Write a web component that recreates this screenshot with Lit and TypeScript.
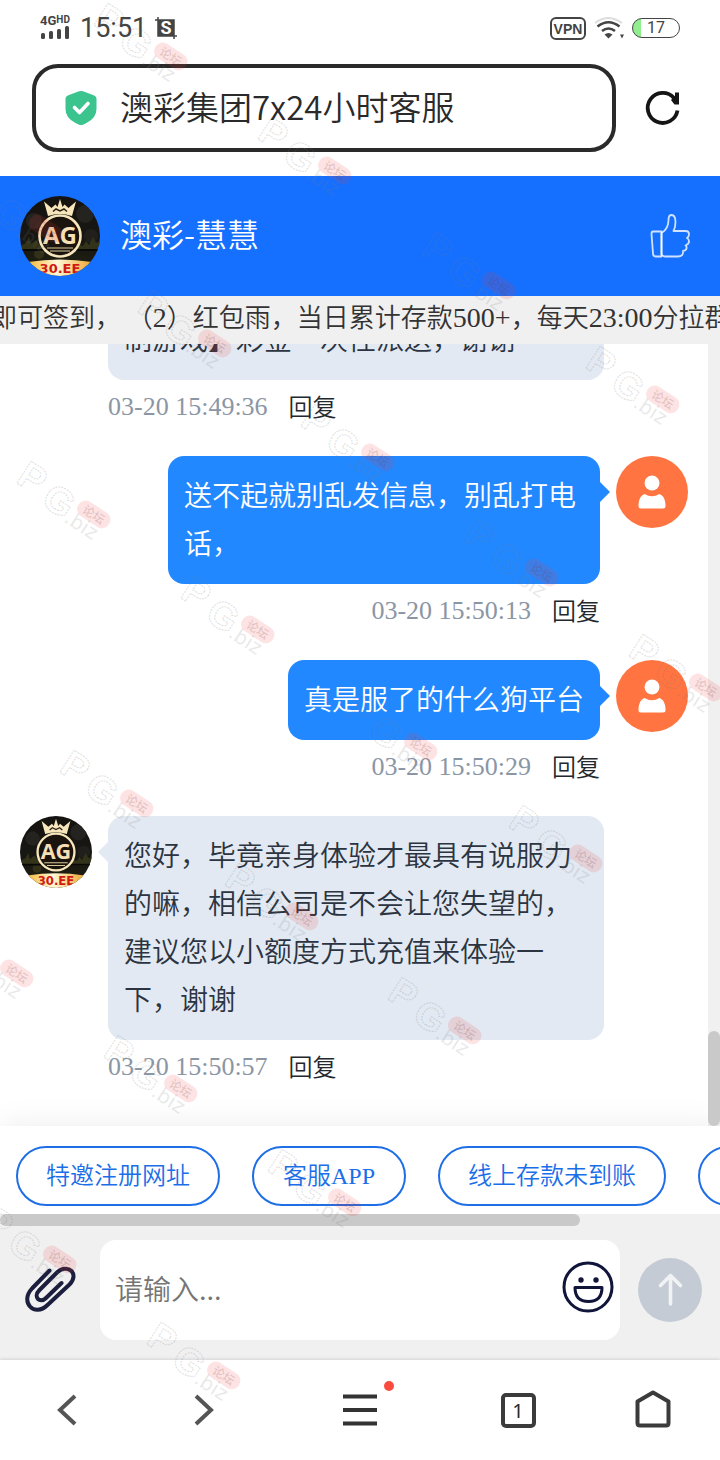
import { LitElement, html, css, svg } from 'lit';
import { customElement, property } from 'lit/decorators.js';
import { classMap } from 'lit/directives/class-map.js';

interface Message {
  from: 'agent' | 'user';
  text: string;
  time: string;
  partial?: boolean;
}

const MESSAGES: Message[] = [
  { from: 'agent', text: '制游戏】彩金一次性派送，谢谢', time: '03-20 15:49:36', partial: true },
  { from: 'user', text: '送不起就别乱发信息，别乱打电话，', time: '03-20 15:50:13' },
  { from: 'user', text: '真是服了的什么狗平台', time: '03-20 15:50:29' },
  {
    from: 'agent',
    text: '您好，毕竟亲身体验才最具有说服力的嘛，相信公司是不会让您失望的，建议您以小额度方式充值来体验一下，谢谢',
    time: '03-20 15:50:57',
  },
];

const CHIPS = ['特邀注册网址', '客服APP', '线上存款未到账', ''];

// Centres of the repeated watermark stamps.
const STAMPS: [number, number][] = [
  [171, 56], [335, 170], [46, 228], [499, 285], [215, 343], [663, 399], [378, 457],
  [94, 514], [542, 572], [258, 629], [706, 687], [421, 746], [137, 803], [586, 858],
  [302, 916], [17, 973], [465, 1030], [181, 1088], [345, 1202], [60, 1259], [224, 1375],
];

@customElement('brand-avatar')
export class BrandAvatar extends LitElement {
  static styles = css`
    :host { display: block; }
    .pic { display: block; width: 100%; height: 100%; }
    .mono { font: 700 24px 'Open Sans', sans-serif; }
    .site { font: 700 13px 'DejaVu Sans', sans-serif; }
  `;

  render() {
    return html`
      <svg class="pic" viewBox="0 0 80 80" role="img" aria-label="AG 30.EE">
        <defs>
          <clipPath id="round"><circle cx="40" cy="40" r="40" /></clipPath>
          <linearGradient id="night" x1="0" y1="0" x2="0" y2="1">
            <stop offset="0" stop-color="#15130f" />
            <stop offset="0.6" stop-color="#171713" />
            <stop offset="1" stop-color="#25220f" />
          </linearGradient>
          <linearGradient id="gold" x1="0" y1="0" x2="1" y2="0">
            <stop offset="0" stop-color="#f6b73a" />
            <stop offset="0.45" stop-color="#fff8d8" />
            <stop offset="1" stop-color="#efa62c" />
          </linearGradient>
        </defs>
        <g clip-path="url(#round)">
          <rect width="80" height="80" fill="url(#night)" />
          <circle cx="14" cy="25" r="8" fill="#24231f" />
          <circle cx="65" cy="18" r="9" fill="#24231f" />
          <circle cx="71" cy="40" r="7" fill="#201f1b" />
          <circle cx="19" cy="58" r="5" fill="#33301a" />
          <path d="M0 50l6-3 3-6 2 7 5-4 4 5 3-3v8H0zM58 48l5 2 3-5 3 4 4-8 3 6 4-2v10H58z" fill="#33331a" />
          <path d="M0 54h80" stroke="#090905" stroke-width="2" />
          <circle cx="40" cy="40" r="20.500" fill="#1b140e" stroke="#f7e6bc" stroke-width="2.600" />
          <path d="M28 20L24 5.500l7.500 6.500 4-3.500L37.500 11 40 3l2.500 8 2-2.500 4 3.500L56 5.500 52 20q-12-4-24 0z" fill="#f7e6bc" />
          <path d="M33 15.500l3-2.500 4 2 4-2 3 2.500" fill="none" stroke="#2a2115" stroke-width="1.500" />
          <text class="mono" x="40" y="48" text-anchor="middle" fill="#f5dfb6">AG</text>
          <path d="M27 52h26M30 55h20" stroke="#d9c79c" stroke-width="1.200" />
          <path d="M8 66q32-5 64 0v16H8z" fill="url(#gold)" />
          <text class="site" x="40" y="77" text-anchor="middle" fill="#cf1b11">30.EE</text>
        </g>
      </svg>
    `;
  }
}

@customElement('chat-message')
export class ChatMessage extends LitElement {
  @property({ attribute: false }) message!: Message;

  static styles = css`
    :host { display: block; flex: none; }
    .row { display: flex; align-items: flex-start; gap: 16px; }
    .user { flex-direction: row-reverse; }
    .face { flex: none; width: 72px; height: 72px; }
    .col { display: flex; flex-direction: column; align-items: flex-start; min-width: 0; width: 496px; }
    .user .col { align-items: flex-end; width: 432px; }
    .bubble {
      position: relative;
      box-sizing: border-box;
      margin: 0;
      padding: 14px 16px 18px;
      border-radius: 16px;
      background: #e2e9f2;
      color: #2b3440;
      font-size: 28px;
      line-height: 48px;
    }
    .agent .bubble { width: 100%; }
    .user .bubble { background: #2288ff; color: #fff; }
    .partial .bubble { display: flex; align-items: flex-end; min-height: 224px; }
    .bubble::before {
      content: '';
      position: absolute;
      top: 26px;
      left: -10px;
      border: 10px solid transparent;
      border-left: 0;
      border-right-color: #e2e9f2;
    }
    .user .bubble::before {
      left: auto;
      right: -10px;
      border-left: 10px solid #2288ff;
      border-right: 0;
    }
    .meta {
      display: flex;
      align-items: center;
      gap: 21px;
      height: 32px;
      margin: 11px 0 33px;
      font-size: 26px;
      color: #8b96a5;
    }
    .stamp { font-family: 'Liberation Serif', serif; line-height: 32px; }
    .reply {
      border: 0;
      padding: 0 0 2px;
      background: none;
      font: inherit;
      font-size: 24px;
      line-height: 30px;
      color: #24282d;
    }
  `;

  render() {
    const m = this.message;
    return html`
      <article class=${classMap({ row: true, agent: m.from === 'agent', user: m.from === 'user', partial: !!m.partial })}>
        ${m.from === 'agent'
          ? html`<brand-avatar class="face"></brand-avatar>`
          : html`
              <svg class="face" viewBox="0 0 72 72" aria-hidden="true">
                <circle cx="36" cy="36" r="36" fill="#ff7440" />
                <circle cx="36" cy="27" r="7.500" fill="#fff" />
                <path d="M28.500 38q7.500 4.500 15 0c4 1.500 6 6 6 12q0 2.500-2.500 2.500H25q-2.500 0-2.500-2.500c0-6 2-10.500 6-12z" fill="#fff" />
              </svg>
            `}
        <div class="col">
          <p class="bubble">${m.text}</p>
          <div class="meta">
            <time class="stamp">${m.time}</time>
            <button class="reply" type="button">回复</button>
          </div>
        </div>
      </article>
    `;
  }
}

@customElement('app-root')
export class AppRoot extends LitElement {
  static styles = css`
    :host {
      position: relative;
      display: flex;
      flex-direction: column;
      height: 100vh;
      overflow: hidden;
      background: #fff;
      font-family: 'Noto Sans CJK SC', sans-serif;
      font-weight: 350;
      color: #2b2b2b;
    }
    button { border: 0; padding: 0; background: none; font: inherit; color: inherit; }
    svg { display: block; flex: none; }

    .status {
      display: flex;
      align-items: center;
      justify-content: space-between;
      height: 56px;
      padding: 0 40px;
      color: #444;
      font-family: Roboto, sans-serif;
    }
    .group { display: flex; align-items: center; gap: 8px; }
    .time { font-size: 27px; font-weight: 400; line-height: 32px; }
    .sig { font: 700 13px Roboto, sans-serif; }
    .hd { font-size: 10px; }
    .snap { font: 700 18px Roboto, sans-serif; }
    .vpn {
      box-sizing: border-box;
      width: 36px;
      height: 23px;
      border: 2px solid #444;
      border-radius: 6px;
      font-family: 'Liberation Sans', sans-serif;
      font-size: 14px;
      font-weight: 700;
      line-height: 20px;
      text-align: center;
    }
    .battery {
      box-sizing: border-box;
      width: 48px;
      height: 20px;
      border: 1px solid #444;
      border-radius: 10px;
      background: linear-gradient(to right, #90ee90 8px, #fff 8px);
      font-size: 16px;
      line-height: 18px;
      text-align: center;
      font-weight: 400;
    }

    .browser { display: flex; align-items: center; gap: 26px; padding: 8px 36px 24px 32px; }
    .address {
      box-sizing: border-box;
      flex: 1;
      min-width: 0;
      height: 88px;
      display: flex;
      align-items: center;
      gap: 20px;
      padding: 0 26px;
      border: 4px solid #2a2a2a;
      border-radius: 26px;
    }
    .url {
      flex: 1;
      min-width: 0;
      border: 0;
      padding: 0 0 4px;
      background: none;
      font: inherit;
      font-size: 33px;
      line-height: 48px;
      color: #2a2a2a;
      outline: none;
    }

    .head {
      display: flex;
      align-items: center;
      gap: 20px;
      height: 120px;
      padding: 0 28px 0 20px;
      background: #1670ff;
      color: #fff;
    }
    .logo { width: 80px; height: 80px; }
    .name { flex: 1; margin: 0; padding-bottom: 6px; font-size: 32px; font-weight: inherit; line-height: 48px; }
    .notice {
      height: 48px;
      overflow: hidden;
      background: #f0f0f0;
      font-size: 26px;
      line-height: 40px;
      white-space: nowrap;
      text-indent: -9px;
      color: #333;
    }
    .num { font-family: 'Liberation Serif', serif; font-size: 28px; }

    .chat { flex: 1; min-height: 0; display: grid; grid-template-columns: 1fr 12px; }
    .list {
      display: flex;
      flex-direction: column;
      justify-content: flex-end;
      min-height: 0;
      overflow: hidden;
      padding: 0 20px 10px;
    }
    .track { display: flex; align-items: flex-end; background: #f0f0f0; }
    .thumb { width: 12px; height: 95px; border-radius: 6px; background: #c9c9c9; z-index: 1; }

    .chips {
      position: relative;
      display: flex;
      gap: 32px;
      overflow: hidden;
      padding: 20px 16px 8px;
      background: #fff;
    }
    .quick { box-shadow: 0 0 30px rgba(0, 0, 0, 0.08); }
    .chip {
      flex: none;
      box-sizing: border-box;
      min-width: 154px;
      height: 60px;
      padding: 0 28px;
      border: 2px solid #1e6ee6;
      border-radius: 30px;
      font-family: 'Liberation Serif', 'Noto Sans CJK SC', serif;
      font-size: 24px;
      line-height: 56px;
      color: #1b6ee8;
    }
    .hbar { display: flex; height: 12px; background: #f0f0f0; }
    .hthumb { flex: 29; border-radius: 6px; background: #c9c9c9; }
    .rest { flex: 7; }

    .compose {
      position: relative;
      display: flex;
      align-items: center;
      gap: 18px;
      padding: 14px 18px 20px;
      background: #f0f0f0;
    }
    .attach { width: 64px; height: 64px; }
    .field {
      flex: 1;
      min-width: 0;
      display: flex;
      align-items: center;
      height: 100px;
      box-sizing: border-box;
      padding: 0 6px 0 15px;
      border-radius: 16px;
      background: #fff;
    }
    .entry {
      flex: 1;
      min-width: 0;
      border: 0;
      padding: 0 0 4px;
      background: none;
      font: inherit;
      font-size: 28px;
      line-height: 40px;
      outline: none;
    }
    .entry::placeholder { color: #757575; }
    .send {
      display: grid;
      place-items: center;
      width: 64px;
      height: 64px;
      border-radius: 50%;
      background: #c5cbd5;
    }

    .nav {
      display: grid;
      grid-template-columns: 134fr 140fr 172fr 144fr 126fr;
      height: 100px;
      padding-right: 4px;
      background: #fff;
      box-shadow: 0 -1px 3px rgba(0, 0, 0, 0.12);
      position: relative;
    }
    .tab { display: grid; place-items: center; }
    .count {
      box-sizing: border-box;
      width: 35px;
      height: 35px;
      border: 4px solid #3b3b3b;
      border-radius: 5px;
      font: 400 20px/27px 'Noto Sans', sans-serif;
      text-align: center;
    }

    .stamps { position: absolute; inset: 0; width: 100%; height: 100%; pointer-events: none; z-index: 2; }
    .big { font: 700 38px 'Liberation Sans', sans-serif; }
    .small { font: 400 20px 'DejaVu Sans', sans-serif; }
    .pill { font: 500 12px 'Noto Sans CJK SC', sans-serif; }
  `;

  private renderStamp([x, y]: [number, number]) {
    return svg`
      <g transform="translate(${x} ${y}) rotate(33)">
        <g fill="none" stroke="#777" stroke-opacity="0.22" stroke-width="1.200" stroke-dasharray="2 1">
          <text class="big" x="-84" y="16">P</text>
          <text class="big" x="-51" y="21">G</text>
        </g>
        <text class="small" x="-22" y="23" fill="#777" fill-opacity="0.17">.biz</text>
        <rect x="-18" y="-8" width="36" height="17" rx="8" fill="#ee3838" fill-opacity="0.14" />
        <text class="pill" x="0" y="5" text-anchor="middle" fill="#733" fill-opacity="0.2">论坛</text>
      </g>
    `;
  }

  render() {
    return html`
      <div class="status">
        <div class="group">
          <svg width="32" height="28" viewBox="0 0 32 28" fill="#444">
            <text class="sig" x="0" y="11">4G<tspan class="hd" dy="-2">HD</tspan></text>
            <rect x="1" y="19" width="4" height="6" rx="1.500" />
            <rect x="9" y="17" width="4" height="8" rx="1.500" />
            <rect x="17" y="15" width="4" height="10" rx="1.500" />
            <rect x="25" y="12" width="4" height="13" rx="1.500" />
          </svg>
          <span class="time">15:51</span>
          <svg width="22" height="22" viewBox="0 0 22 22">
            <path d="M0 3h19v19M3 0v19h19" fill="none" stroke="#444" stroke-width="1.500" />
            <rect x="3" y="3" width="16" height="16" fill="#444" />
            <text class="snap" x="11" y="17" text-anchor="middle" fill="#fff">S</text>
          </svg>
        </div>
        <div class="group">
          <span class="vpn">VPN</span>
          <svg width="30" height="22" viewBox="0 0 30 22" fill="none" stroke-width="2.600">
            <path d="M1 6q13-10 27 0" stroke="#ddd" stroke-width="2" />
            <path d="M3.500 9.500q11-8.500 22 0M8 14q6.500-5 13 0" stroke="#444" />
            <path d="M10.500 17.500q4-3 8 0l-4 4zM26 17.500h4l-2 4z" fill="#444" />
          </svg>
          <span class="battery">17</span>
        </div>
      </div>

      <div class="browser">
        <div class="address">
          <svg width="38" height="36" viewBox="0 0 38 36">
            <path d="M19 1q2 0 4 1l8 3q3.500 1 3.500 4v10q0 9-10 14l-3 1.500q-2.500 1-5 0L13.500 33q-10-5-10-14V9q0-3 3.500-4l8-3q2-1 4-1z" fill="#3cc48f" />
            <path d="M12.500 17.500l5 5 8.500-9" fill="none" stroke="#fff" stroke-width="3.600" stroke-linecap="round" stroke-linejoin="round" />
          </svg>
          <input class="url" type="text" aria-label="地址" .value=${'澳彩集团7x24小时客服'} />
        </div>
        <button type="button" aria-label="刷新">
          <svg width="42" height="42" viewBox="0 0 42 42">
            <path d="M35.500 23.500a15 15 0 1 1-3.500-12.500" fill="none" stroke="#151515" stroke-width="3.800" />
            <path d="M37 5.500v12h-4.500L29 13l4-4V5.500z" fill="#151515" />
          </svg>
        </button>
      </div>

      <header class="head">
        <brand-avatar class="logo"></brand-avatar>
        <h1 class="name">澳彩-慧慧</h1>
        <button type="button" aria-label="点赞">
          <svg width="44" height="48" viewBox="0 0 44 48" fill="none" stroke="#fff" stroke-opacity="0.8" stroke-width="1.800" stroke-linejoin="round">
            <path d="M5 19.500h8.500v25H8q-3 0-3-3L3.500 22q0-2.500 1.500-2.500z" />
            <path d="M13.500 21q7-4 7-13 0-5 3-5 4 0 4 7 0 5-2 9h12q3.500 0 3.500 3t-2 4q2 1 2 3.500T37.500 33.500q1.500 1 1 3T35 39q.5 5.500-5 5.500H17q-2 0-3.500-2z" />
          </svg>
        </button>
      </header>

      <div class="notice">即可签到， （<span class="num">2</span>）红包雨，当日累计存款<span class="num">500+</span>，每天<span class="num">23:00</span>分拉群</div>

      <main class="chat">
        <div class="list">
          ${MESSAGES.map((m) => html`<chat-message .message=${m}></chat-message>`)}
        </div>
        <div class="track"><div class="thumb"></div></div>
      </main>

      <div class="quick">
        <div class="chips">
          ${CHIPS.map((c) => html`<button class="chip" type="button">${c}</button>`)}
        </div>
        <div class="hbar"><div class="hthumb"></div><div class="rest"></div></div>
      </div>

      <div class="compose">
        <button class="attach" type="button" aria-label="附件">
          <svg width="64" height="64" viewBox="0 0 64 64" fill="none" stroke="#1c1e3d" stroke-width="4" stroke-linecap="round" stroke-linejoin="round">
            <path d="M31.500 12.500L14 30.500c-6.500 7-5.500 14-2 18s11 5 17.500-1.500l22-20.500c5.500-5.500 4.500-11 2-13.500s-9-4-14 1L21.500 32c-4 4-3 7.500-1.500 9s5 2 8-1L43.500 25" />
          </svg>
        </button>
        <div class="field">
          <input class="entry" type="text" aria-label="输入消息" placeholder="请输入..." />
          <button type="button" aria-label="表情">
            <svg width="52" height="58" viewBox="0 0 52 58" fill="none" stroke="#11153a" stroke-width="3">
              <circle cx="26" cy="26" r="24" />
              <circle cx="19" cy="19" r="2.700" fill="#11153a" stroke="none" />
              <circle cx="34" cy="19" r="2.700" fill="#11153a" stroke="none" />
              <path d="M13 26.500h27q0 14-13.500 14T13 26.500z" stroke-linejoin="round" />
            </svg>
          </button>
        </div>
        <button class="send" type="button" aria-label="发送">
          <svg width="64" height="64" viewBox="0 0 64 64" fill="none" stroke="#f0f2f4" stroke-width="3.600" stroke-linecap="round" stroke-linejoin="round">
            <path d="M32.500 46V17.500M22.500 27.500l10-10 10 10" />
          </svg>
        </button>
      </div>

      <nav class="nav">
        <button class="tab" type="button" aria-label="后退">
          <svg width="36" height="36" viewBox="0 0 36 36" fill="none" stroke="#555" stroke-width="4"><path d="M26 4L11 18l15 14" /></svg>
        </button>
        <button class="tab" type="button" aria-label="前进">
          <svg width="36" height="36" viewBox="0 0 36 36" fill="none" stroke="#555" stroke-width="4"><path d="M10 4l15 14-15 14" /></svg>
        </button>
        <button class="tab" type="button" aria-label="菜单">
          <svg width="80" height="60" viewBox="0 0 80 60">
            <path d="M23 16.500h34M23 30h34M23 43.500h34" stroke="#333" stroke-width="4" />
            <circle cx="69" cy="6" r="5" fill="#fb4a3e" />
          </svg>
        </button>
        <button class="tab" type="button" aria-label="标签页"><span class="count">1</span></button>
        <button class="tab" type="button" aria-label="主页">
          <svg width="40" height="40" viewBox="0 0 40 40" fill="none" stroke="#3b3b3b" stroke-width="4" stroke-linejoin="round">
            <path d="M4.500 11.500L20 2.500l15.500 9V33q0 2.500-2.500 2.500H7q-2.500 0-2.500-2.500z" />
          </svg>
        </button>
      </nav>

      <svg class="stamps" aria-hidden="true">${STAMPS.map((s) => this.renderStamp(s))}</svg>
    `;
  }
}
